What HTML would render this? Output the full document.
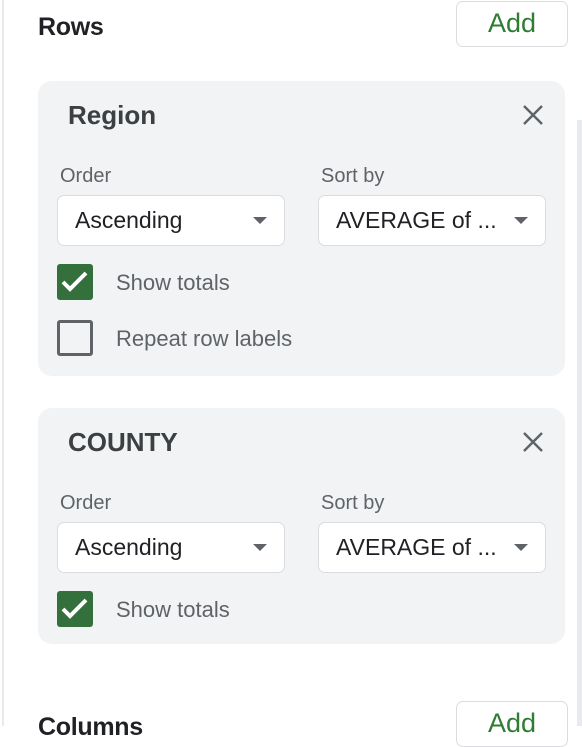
<!DOCTYPE html>
<html><head><style>
*{margin:0;padding:0;box-sizing:border-box}
body{width:582px;height:726px;overflow:hidden;background:#fff;font-family:"Liberation Sans",Arial,sans-serif;position:relative}
.lb{position:absolute;left:2px;top:0;width:2px;height:726px;background:#e8eaed}
.sb{position:absolute;left:577px;top:120px;width:5px;height:606px;background:#e8eaed}
.h{position:absolute;left:38px;font-size:25px;color:#202124;font-weight:bold;letter-spacing:-0.3px}
.add{position:absolute;left:456px;width:112px;height:46px;border:1.5px solid #dadce0;border-radius:7px;color:#2e7d32;font-size:27px;text-align:center;line-height:43px;background:#fff}
.card{position:absolute;left:38px;width:527px;background:#f1f3f4;border-radius:14px}
.t{position:absolute;left:30px;font-size:26px;font-weight:bold;color:#3c4043}
.x{position:absolute;left:484px;width:22px;height:22px}
.lbl{position:absolute;font-size:20px;color:#5f6368}
.sel{position:absolute;width:228px;height:51px;background:#fff;border:1.5px solid #dadce0;border-radius:7px;font-size:23px;color:#202124;line-height:48px;padding-left:17px}
.sel:after{content:"";position:absolute;right:17px;top:21px;border-left:7px solid transparent;border-right:7px solid transparent;border-top:7px solid #5f6368}
.cb{position:absolute;left:19px;width:36px;height:36px;border-radius:3px}
.on{background:#34703c}
.off{border:3px solid #5f6368}
.ct{position:absolute;left:78px;font-size:22px;color:#5f6368}
</style></head><body>
<div class="lb"></div><div class="sb"></div>
<div class="h" style="top:13px">Rows</div>
<div class="add" style="top:1px">Add</div>

<div class="card" style="top:81px;height:295px">
<div class="t" style="top:19px">Region</div>
<svg class="x" style="top:23px" viewBox="0 0 22 22"><path d="M2 2L20 20M20 2L2 20" stroke="#5f6368" stroke-width="2.4"/></svg>
<div class="lbl" style="left:22px;top:84px">Order</div>
<div class="lbl" style="left:283px;top:84px">Sort by</div>
<div class="sel" style="left:19px;top:114px">Ascending</div>
<div class="sel" style="left:280px;top:114px">AVERAGE of ...</div>
<div class="cb on" style="top:183px"><svg width="36" height="36" viewBox="0 0 36 36"><path d="M6 18l7 7 16-16" stroke="#fff" stroke-width="4" fill="none"/></svg></div>
<div class="ct" style="top:189px">Show totals</div>
<div class="cb off" style="top:239px"></div>
<div class="ct" style="top:245px">Repeat row labels</div>
</div>

<div class="card" style="top:408px;height:236px">
<div class="t" style="top:19px">COUNTY</div>
<svg class="x" style="top:23px" viewBox="0 0 22 22"><path d="M2 2L20 20M20 2L2 20" stroke="#5f6368" stroke-width="2.4"/></svg>
<div class="lbl" style="left:22px;top:84px">Order</div>
<div class="lbl" style="left:283px;top:84px">Sort by</div>
<div class="sel" style="left:19px;top:114px">Ascending</div>
<div class="sel" style="left:280px;top:114px">AVERAGE of ...</div>
<div class="cb on" style="top:183px"><svg width="36" height="36" viewBox="0 0 36 36"><path d="M6 18l7 7 16-16" stroke="#fff" stroke-width="4" fill="none"/></svg></div>
<div class="ct" style="top:189px">Show totals</div>
</div>

<div class="h" style="top:713px">Columns</div>
<div class="add" style="top:701px">Add</div>
</body></html>
